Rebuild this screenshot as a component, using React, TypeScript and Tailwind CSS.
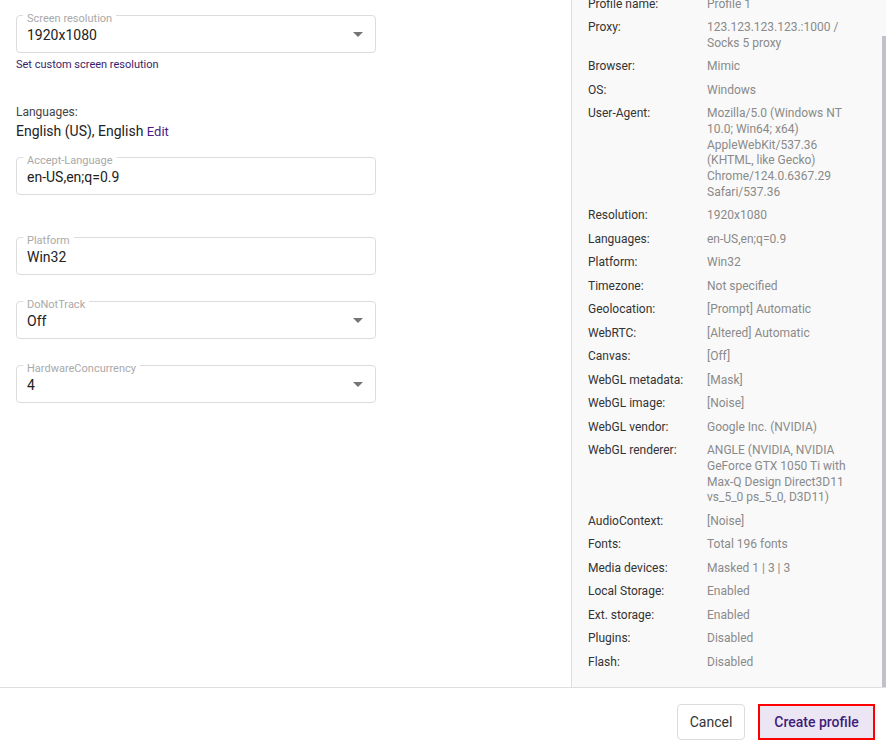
import React from "react";

const font = { fontFamily: "Roboto, 'Liberation Sans', sans-serif" };

function Field({ label, value, select }: { label: string; value: string; select?: boolean }) {
  return (
    <div className="relative h-[38px] w-[360px] rounded-[4px] border border-[#dcdcdc] flex items-center pl-[10px] pr-[12px] pt-[3px]">
      <span className="absolute left-[6px] top-[-3px] bg-white px-[4px] text-[11px] leading-[12px] text-[#a9a9a9]">
        {label}
      </span>
      <span className="flex-1 text-[14px] text-[#222]">{value}</span>
      {select && (
        <svg width="10" height="5" viewBox="0 0 10 5" className="mt-[-2px]">
          <path d="M0 0 L10 0 L5 5 Z" fill="#757575" />
        </svg>
      )}
    </div>
  );
}

const rows: [string, string][] = [
  ["Profile name:", "Profile 1"],
  ["Proxy:", "123.123.123.123.:1000 / Socks 5 proxy"],
  ["Browser:", "Mimic"],
  ["OS:", "Windows"],
  ["User-Agent:", "Mozilla/5.0 (Windows NT 10.0; Win64; x64) AppleWebKit/537.36 (KHTML, like Gecko) Chrome/124.0.6367.29 Safari/537.36"],
  ["Resolution:", "1920x1080"],
  ["Languages:", "en-US,en;q=0.9"],
  ["Platform:", "Win32"],
  ["Timezone:", "Not specified"],
  ["Geolocation:", "[Prompt] Automatic"],
  ["WebRTC:", "[Altered] Automatic"],
  ["Canvas:", "[Off]"],
  ["WebGL metadata:", "[Mask]"],
  ["WebGL image:", "[Noise]"],
  ["WebGL vendor:", "Google Inc. (NVIDIA)"],
  ["WebGL renderer:", "ANGLE (NVIDIA, NVIDIA GeForce GTX 1050 Ti with Max-Q Design Direct3D11 vs_5_0 ps_5_0, D3D11)"],
  ["AudioContext:", "[Noise]"],
  ["Fonts:", "Total 196 fonts"],
  ["Media devices:", "Masked 1 | 3 | 3"],
  ["Local Storage:", "Enabled"],
  ["Ext. storage:", "Enabled"],
  ["Plugins:", "Disabled"],
  ["Flash:", "Disabled"],
];

export default function App() {
  return (
    <div style={font} className="w-[886px] h-[752px] flex flex-col bg-white overflow-hidden">
      <div className="flex h-[687px] overflow-hidden">
        <div className="w-[571px] pl-4 pt-[15px] flex flex-col">
          <Field label="Screen resolution" value="1920x1080" select />
          <div className="mt-[5px] text-[11px] leading-[14px] text-[#3a1d6b]">Set custom screen resolution</div>
          <div className="mt-[33px] text-[12px] leading-[14px] text-[#444]">Languages:</div>
          <div className="mt-[4px] text-[14px] leading-[16px] text-[#222]">
            English (US), English <span className="text-[13px] text-[#4a1a82]">Edit</span>
          </div>
          <div className="mt-[17px]">
            <Field label="Accept-Language" value="en-US,en;q=0.9" />
          </div>
          <div className="mt-[42px]">
            <Field label="Platform" value="Win32" />
          </div>
          <div className="mt-[26px]">
            <Field label="DoNotTrack" value="Off" select />
          </div>
          <div className="mt-[26px]">
            <Field label="HardwareConcurrency" value="4" select />
          </div>
        </div>
        <div className="relative flex-1 border-l border-[#dedede] bg-[#f9f9f9] pl-4">
          <div className="mt-[-3.5px] flex flex-col gap-[7.8px] text-[12px] leading-[15.7px]">
            {rows.map(([k, v]) => (
              <div key={k} className="flex">
                <div className="w-[119px] shrink-0 text-[#333]">{k}</div>
                <div className="w-[155px] text-[#8a8a8a]">{v}</div>
              </div>
            ))}
          </div>
          <div className="absolute right-0 top-[36px] bottom-0 w-[4px] bg-[#c1c1c9]" />
        </div>
      </div>
      <div className="flex-1 border-t border-[#dedede] flex items-start justify-end pt-[16px] pr-[11px] gap-[13px]">
        <button className="h-[36px] w-[68px] rounded-[4px] border border-[#dcdcdc] bg-white text-[14px] text-[#333]">
          Cancel
        </button>
        <button className="h-[36px] w-[117px] border-2 border-[#ff0000] bg-[#ece6f4] text-[14px] font-medium text-[#3f1d78]">
          Create profile
        </button>
      </div>
    </div>
  );
}
